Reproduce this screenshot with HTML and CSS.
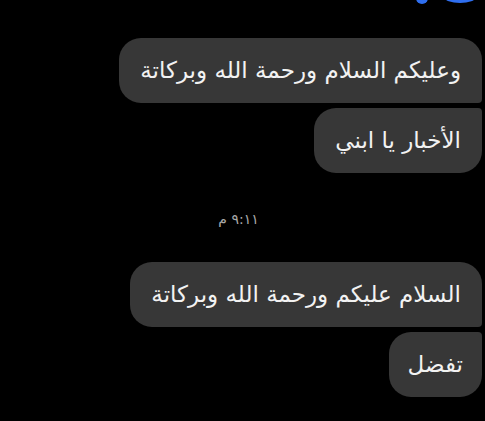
FILE: index.html
```html
<!DOCTYPE html>
<html lang="ar" dir="rtl">
<head>
    <meta charset="UTF-8">
    <meta name="viewport" content="width=device-width, initial-scale=1.0">
    <title>محادثة</title>
    <link rel="stylesheet" href="styles.css">
</head>
<body>
    <div class="chat">
        <!-- tail of the previous message, scrolled mostly out of view -->
        <div class="prev-tail">
            <svg width="60" height="5" viewBox="0 0 60 5">
                <ellipse cx="45" cy="-3" rx="16" ry="6" fill="#2f6ff0"/>
                <ellipse cx="7" cy="-2" rx="6" ry="6" fill="#2f6ff0"/>
            </svg>
        </div>

        <div class="group first-group">
            <div class="bubble top">وعليكم السلام ورحمة الله وبركاتة</div>
            <div class="bubble bottom">الأخبار يا ابني</div>
        </div>

        <div class="time">٩:١١ م</div>

        <div class="group">
            <div class="bubble top">السلام عليكم ورحمة الله وبركاتة</div>
            <div class="bubble bottom short">تفضل</div>
        </div>
    </div>
</body>
</html>
```

FILE: styles.css
```css
html, body {
    margin: 0;
    padding: 0;
    background-color: #000;
    font-family: "DejaVu Sans", sans-serif;
}

.chat {
    display: flex;
    flex-direction: column;
    height: 421px;
    overflow: hidden;
}

.prev-tail {
    display: flex;
    height: 5px;
    padding-right: 10px;
}

.prev-tail svg {
    display: block;
}

.group {
    display: flex;
    flex-direction: column;
    align-items: flex-start;
    gap: 5px;
    padding-right: 3px;
}

.first-group {
    margin-top: 33px;
}

/* grey bubbles, the small corner marks the joined side */
.bubble {
    background-color: #373737;
    color: #f2f2f2;
    font-size: 23px;
    line-height: 65px;
    height: 65px;
    padding: 0 21px;
    box-sizing: border-box;
    white-space: nowrap;
}

.bubble.short {
    padding: 0 19px;
}

.bubble.top {
    border-radius: 22px 22px 4px 22px;
}

.bubble.bottom {
    border-radius: 22px 4px 22px 22px;
}

.time {
    color: #a8a8a8;
    font-size: 14px;
    text-align: center;
    padding-right: 8px;
    margin: 38px 0 35px;
}
```
